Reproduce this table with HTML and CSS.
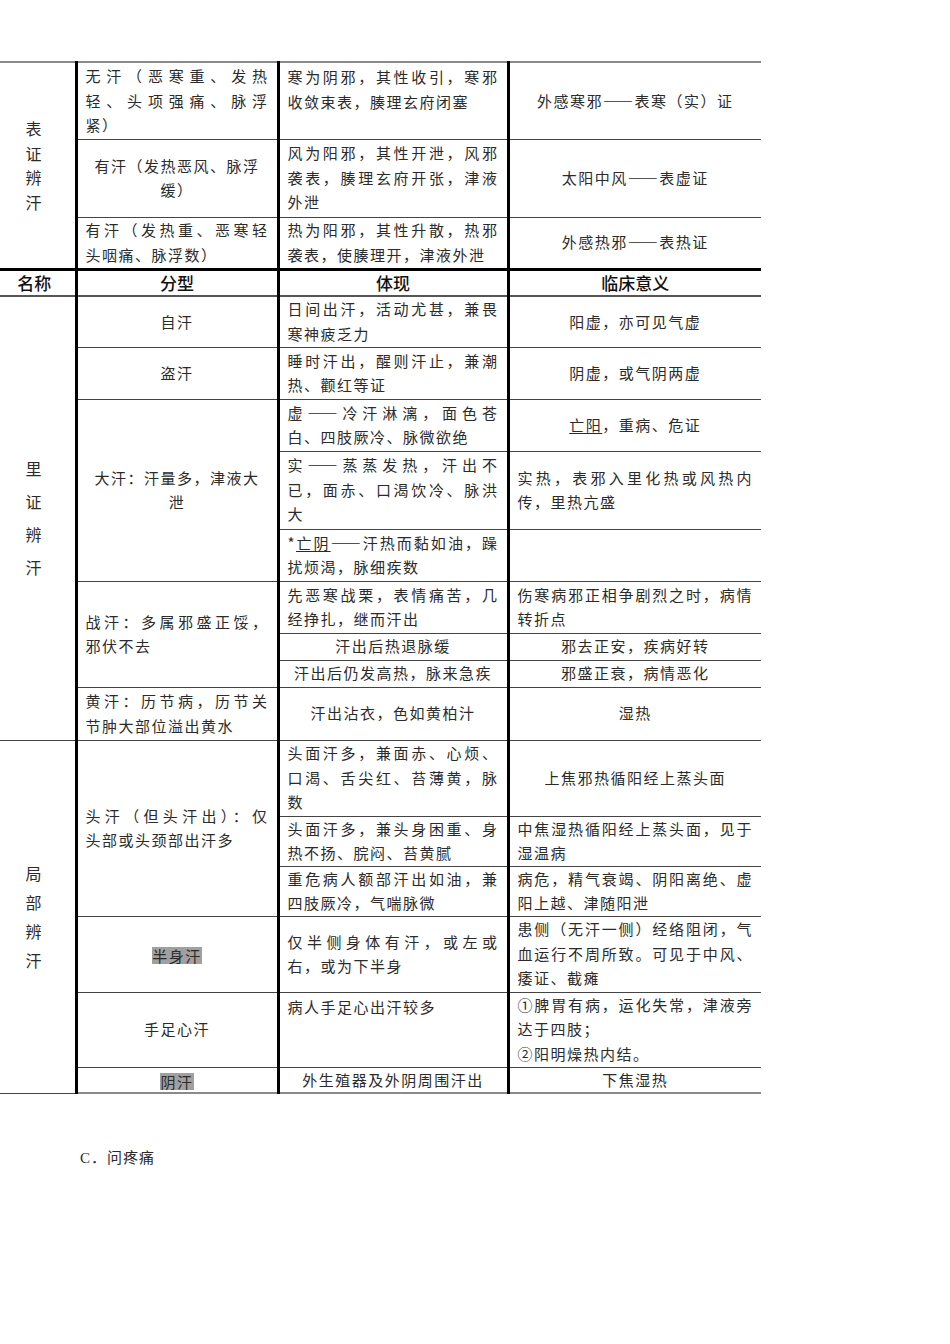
FILE: index.html
```html
<!DOCTYPE html>
<html lang="zh-CN">
<head>
<meta charset="utf-8">
<title>问汗</title>
<link rel="stylesheet" href="styles.css">
</head>
<body>
<div class="page">
<table class="sweat">
<colgroup><col class="w1"><col class="w2"><col class="w3"><col class="w4"></colgroup>
<tbody>
<tr class="first h77">
  <td class="k1 s1" rowspan="3">表<br>证<br>辨<br>汗</td>
  <td class="k2"><div class="j">无汗（恶寒重、发热</div><div class="j">轻、头项强痛、脉浮</div><div>紧）</div></td>
  <td class="k3 top"><div class="j">寒为阴邪，其性收引，寒邪</div><div>收敛束表，腠理玄府闭塞</div></td>
  <td class="k4 c">外感寒邪——表寒（实）证</td>
</tr>
<tr class="h78">
  <td class="k2 c">有汗（发热恶风、脉浮<br>缓）</td>
  <td class="k3"><div class="j">风为阳邪，其性开泄，风邪</div><div class="j">袭表，腠理玄府开张，津液</div><div>外泄</div></td>
  <td class="k4 c">太阳中风——表虚证</td>
</tr>
<tr class="h52">
  <td class="k2"><div class="j">有汗（发热重、恶寒轻</div><div>头咽痛、脉浮数）</div></td>
  <td class="k3"><div class="j">热为阳邪，其性升散，热邪</div><div>袭表，使腠理开，津液外泄</div></td>
  <td class="k4 c">外感热邪——表热证</td>
</tr>
<tr class="head h27">
  <th class="k1">名称</th>
  <th class="k2">分型</th>
  <th class="k3">体现</th>
  <th class="k4">临床意义</th>
</tr>
<tr class="h51">
  <td class="k1 s2" rowspan="9">里<br>证<br>辨<br>汗</td>
  <td class="k2 c">自汗</td>
  <td class="k3"><div class="j">日间出汗，活动尤甚，兼畏</div><div>寒神疲乏力</div></td>
  <td class="k4 c">阳虚，亦可见气虚</td>
</tr>
<tr class="h52">
  <td class="k2 c">盗汗</td>
  <td class="k3"><div class="j">睡时汗出，醒则汗止，兼潮</div><div>热、颧红等证</div></td>
  <td class="k4 c">阴虚，或气阴两虚</td>
</tr>
<tr class="h52">
  <td class="k2 c" rowspan="3">大汗：汗量多，津液大<br>泄</td>
  <td class="k3"><div class="j">虚——冷汗淋漓，面色苍</div><div>白、四肢厥冷、脉微欲绝</div></td>
  <td class="k4 c"><u class="ul">亡阳</u>，重病、危证</td>
</tr>
<tr class="h78">
  <td class="k3"><div class="j">实——蒸蒸发热，汗出不</div><div class="j">已，面赤、口渴饮冷、脉洪</div><div>大</div></td>
  <td class="k4"><div class="j">实热，表邪入里化热或风热内</div><div>传，里热亢盛</div></td>
</tr>
<tr class="h52">
  <td class="k3"><div class="j">*<u class="ul">亡阴</u>——汗热而黏如油，躁</div><div>扰烦渴，脉细疾数</div></td>
  <td class="k4"></td>
</tr>
<tr class="h52">
  <td class="k2" rowspan="3"><div class="j">战汗：多属邪盛正馁，</div><div>邪伏不去</div></td>
  <td class="k3"><div class="j">先恶寒战栗，表情痛苦，几</div><div>经挣扎，继而汗出</div></td>
  <td class="k4"><div class="j">伤寒病邪正相争剧烈之时，病情</div><div>转折点</div></td>
</tr>
<tr class="h27">
  <td class="k3 c">汗出后热退脉缓</td>
  <td class="k4 c">邪去正安，疾病好转</td>
</tr>
<tr class="h27">
  <td class="k3 c">汗出后仍发高热，脉来急疾</td>
  <td class="k4 c">邪盛正衰，病情恶化</td>
</tr>
<tr class="h53">
  <td class="k2"><div class="j">黄汗：历节病，历节关</div><div>节肿大部位溢出黄水</div></td>
  <td class="k3 c">汗出沾衣，色如黄柏汁</td>
  <td class="k4 c">湿热</td>
</tr>
<tr class="h76">
  <td class="k1 s3" rowspan="6">局<br>部<br>辨<br>汗</td>
  <td class="k2" rowspan="3"><div class="j">头汗（但头汗出）：仅</div><div>头部或头颈部出汗多</div></td>
  <td class="k3"><div class="j">头面汗多，兼面赤、心烦、</div><div class="j">口渴、舌尖红、苔薄黄，脉</div><div>数</div></td>
  <td class="k4 c">上焦邪热循阳经上蒸头面</td>
</tr>
<tr class="h50">
  <td class="k3"><div class="j">头面汗多，兼头身困重、身</div><div>热不扬、脘闷、苔黄腻</div></td>
  <td class="k4"><div class="j">中焦湿热循阳经上蒸头面，见于</div><div>湿温病</div></td>
</tr>
<tr class="h50">
  <td class="k3"><div class="j">重危病人额部汗出如油，兼</div><div>四肢厥冷，气喘脉微</div></td>
  <td class="k4"><div class="j">病危，精气衰竭、阴阳离绝、虚</div><div>阳上越、津随阳泄</div></td>
</tr>
<tr class="h76">
  <td class="k2 c"><span class="hl">半身汗</span></td>
  <td class="k3"><div class="j">仅半侧身体有汗，或左或</div><div>右，或为下半身</div></td>
  <td class="k4"><div class="j">患侧（无汗一侧）经络阻闭，气</div><div class="j">血运行不周所致。可见于中风、</div><div>痿证、截瘫</div></td>
</tr>
<tr class="h75">
  <td class="k2 c">手足心汗</td>
  <td class="k3 top">病人手足心出汗较多</td>
  <td class="k4"><div class="j">①脾胃有病，运化失常，津液旁</div><div>达于四肢；</div><div>②阳明燥热内结。</div></td>
</tr>
<tr class="last h25">
  <td class="k2 c"><span class="hl">阴汗</span></td>
  <td class="k3 c">外生殖器及外阴周围汗出</td>
  <td class="k4 c">下焦湿热</td>
</tr>
</tbody>
</table>
<p class="next">C．问疼痛</p>
</div>
</body>
</html>
```
FILE: styles.css
```css
html, body {
  margin: 0;
  padding: 0;
  background: #ffffff;
}

body {
  font-family: "Noto Sans CJK SC", "Liberation Serif", serif;
  color: #2b2b2b;
}

.page {
  padding-top: 61px;
}

.sweat {
  border-collapse: collapse;
  table-layout: fixed;
  width: 761px;
  font-size: 15px;
  font-weight: 400;
  letter-spacing: 1.5px;
  line-height: 24.5px;
}

.w1 { width: 76px; }
.w2 { width: 202px; }
.w3 { width: 230px; }
.w4 { width: 253px; }

/* row heights, border to border */
.h25 { height: 25px; }
.h27 { height: 27px; }
.h50 { height: 50px; }
.h51 { height: 51px; }
.h52 { height: 52px; }
.h53 { height: 53px; }
.h75 { height: 75px; }
.h76 { height: 76px; }
.h77 { height: 77px; }
.h78 { height: 78px; }

.sweat td {
  border-top: 1px solid #444444;
  border-bottom: 1px solid #444444;
  padding: 0 8px;
  vertical-align: middle;
  text-align: left;
}

.sweat .k2,
.sweat .k3,
.sweat .k4 {
  border-left: 3px solid #000000;
}

.sweat td.k1 {
  text-align: center;
  padding: 0 6px 0 0;
  font-size: 16px;
}

.s1 { line-height: 24.5px; }
.sweat td.s2 { line-height: 33px; }
.sweat td.s3 { line-height: 29px; }

.sweat .first td {
  border-top: 2px solid #8a8a8a;
}

.sweat .last td {
  border-bottom: 2px solid #8a8a8a;
}

.sweat td.c {
  text-align: center;
}

.sweat td.top {
  vertical-align: top;
  padding-top: 2px;
}

.j {
  text-align: justify;
  text-align-last: justify;
}

.head th {
  border-top: 3px solid #000000;
  border-bottom: 2px solid #555555;
  padding: 0;
  font-size: 17px;
  font-weight: 500;
  letter-spacing: 0;
  line-height: 24px;
  text-align: center;
  color: #111111;
}

.head th.k1 {
  padding-right: 6px;
}

.ul {
  text-decoration: underline;
  text-underline-offset: 2px;
}

.hl {
  display: inline-block;
  vertical-align: middle;
  background: #a0a0a0;
  line-height: 17px;
}

.next {
  margin: 52px 0 0 80px;
  font-family: "Liberation Serif", "Noto Sans CJK SC", serif;
  font-size: 15px;
  font-weight: 400;
  letter-spacing: 1px;
  line-height: 25px;
  color: #2b2b2b;
}
```
